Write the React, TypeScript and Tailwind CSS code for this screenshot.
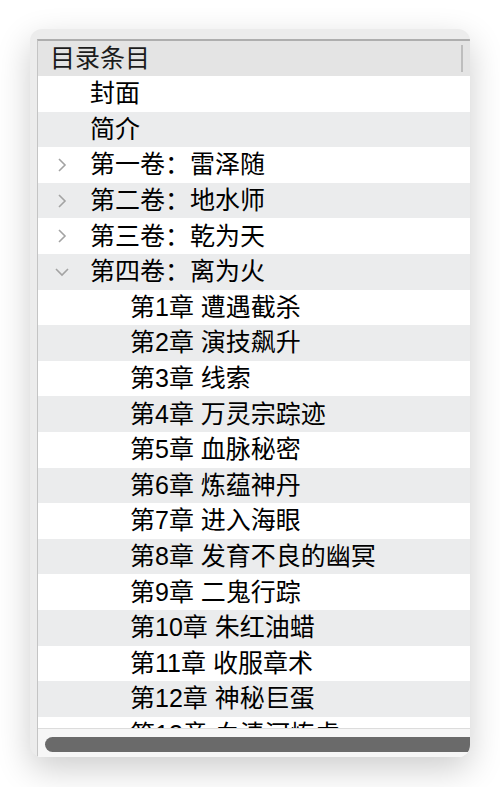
const font = { fontFamily: '"Liberation Sans", "Noto Sans CJK SC", sans-serif' }

type Row = { label: string; level: 0 | 1; toggle?: 'closed' | 'open' }

const rows: Row[] = [
  { label: '封面', level: 0 },
  { label: '简介', level: 0 },
  { label: '第一卷：雷泽随', level: 0, toggle: 'closed' },
  { label: '第二卷：地水师', level: 0, toggle: 'closed' },
  { label: '第三卷：乾为天', level: 0, toggle: 'closed' },
  { label: '第四卷：离为火', level: 0, toggle: 'open' },
  { label: '第1章 遭遇截杀', level: 1 },
  { label: '第2章 演技飙升', level: 1 },
  { label: '第3章 线索', level: 1 },
  { label: '第4章 万灵宗踪迹', level: 1 },
  { label: '第5章 血脉秘密', level: 1 },
  { label: '第6章 炼蕴神丹', level: 1 },
  { label: '第7章 进入海眼', level: 1 },
  { label: '第8章 发育不良的幽冥', level: 1 },
  { label: '第9章 二鬼行踪', level: 1 },
  { label: '第10章 朱红油蜡', level: 1 },
  { label: '第11章 收服章术', level: 1 },
  { label: '第12章 神秘巨蛋', level: 1 },
  { label: '第13章 血渍河炼虎', level: 1 },
]

const Chevron = ({ open }: { open: boolean }) =>
  open ? (
    <svg width="16" height="10" viewBox="0 0 16 10" className="absolute left-[16px] top-[13px]">
      <path d="M2 2 L8 8 L14 2" fill="none" stroke="#a3a3a3" strokeWidth="1.6" />
    </svg>
  ) : (
    <svg width="10" height="16" viewBox="0 0 10 16" className="absolute left-[19px] top-[10px]">
      <path d="M2 2 L8 8 L2 14" fill="none" stroke="#a3a3a3" strokeWidth="1.6" />
    </svg>
  )

const App = () => {
  return (
    <div className="h-[787px] w-[500px] bg-white pl-[30px] pt-[29px]" style={font}>
      <div className="flex h-[728px] w-[440px] flex-col overflow-hidden rounded-[12px] bg-[#ececec] pl-[7px] pt-[10px] shadow-[0_12px_34px_rgba(0,0,0,0.2)]">
        <div className="flex min-h-0 flex-1 flex-col border-l border-t-2 border-[#c4c4c4] border-t-[#aeaeae] bg-white">
          <div className="relative flex h-[35px] shrink-0 items-center bg-[#e4e4e4] pl-[12px] text-[25px] leading-none text-[#1c1c1c]">
            目录条目
            <span className="absolute left-[423px] top-[4px] h-[27px] w-[2px] bg-[#bdbdbd]" />
          </div>
          <div className="min-h-0 flex-1 overflow-hidden">
            {rows.map((row, i) => (
              <div
                key={row.label}
                className={`relative flex h-[35.6px] items-center text-[25px] leading-none text-black ${
                  i % 2 === 1 ? 'bg-[#ebeced]' : 'bg-white'
                } ${row.level === 0 ? 'pl-[52px]' : 'pl-[92px]'}`}
              >
                {row.toggle ? <Chevron open={row.toggle === 'open'} /> : null}
                <span className="whitespace-nowrap">{row.label}</span>
              </div>
            ))}
          </div>
          <div className="h-[29px] shrink-0 border-t border-[#dcdcdc] bg-[#f6f6f6] pl-[7px] pt-[8px]">
            <div className="h-[15px] w-[460px] rounded-full bg-[#6a6a6a]" />
          </div>
        </div>
      </div>
    </div>
  )
}

export default App
